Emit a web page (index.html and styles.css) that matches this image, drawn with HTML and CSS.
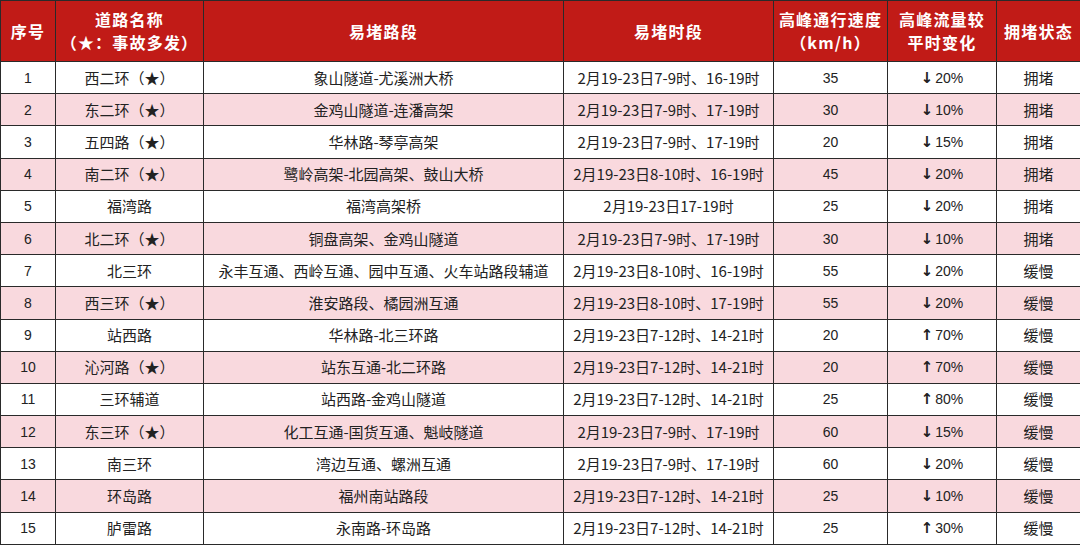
FILE: index.html
```html
<!DOCTYPE html>
<html lang="zh">
<head>
<meta charset="utf-8">
<link rel="stylesheet" href="styles.css">
</head>
<body>
<table class="tbl">
<colgroup>
<col class="c1"><col class="c2"><col class="c3"><col class="c4"><col class="c5"><col class="c6"><col class="c7">
</colgroup>
<thead>
<tr>
<th>序号</th>
<th><div class="hl">道路名称</div><div class="hl">（★：事故多发）</div></th>
<th>易堵路段</th>
<th>易堵时段</th>
<th><div class="hl">高峰通行速度</div><div class="hl">（km/h）</div></th>
<th><div class="hl">高峰流量较</div><div class="hl">平时变化</div></th>
<th>拥堵状态</th>
</tr>
</thead>
<tbody>
<tr><td class="num">1</td><td>西二环（★）</td><td>象山隧道-尤溪洲大桥</td><td>2月19-23日7-9时、16-19时</td><td class="num">35</td><td class="pct"><span class="ar">↓</span>20%</td><td>拥堵</td></tr>
<tr class="pk"><td class="num">2</td><td>东二环（★）</td><td>金鸡山隧道-连潘高架</td><td>2月19-23日7-9时、17-19时</td><td class="num">30</td><td class="pct"><span class="ar">↓</span>10%</td><td>拥堵</td></tr>
<tr><td class="num">3</td><td>五四路（★）</td><td>华林路-琴亭高架</td><td>2月19-23日7-9时、17-19时</td><td class="num">20</td><td class="pct"><span class="ar">↓</span>15%</td><td>拥堵</td></tr>
<tr class="pk"><td class="num">4</td><td>南二环（★）</td><td>鹭岭高架-北园高架、鼓山大桥</td><td>2月19-23日8-10时、16-19时</td><td class="num">45</td><td class="pct"><span class="ar">↓</span>20%</td><td>拥堵</td></tr>
<tr><td class="num">5</td><td>福湾路</td><td>福湾高架桥</td><td>2月19-23日17-19时</td><td class="num">25</td><td class="pct"><span class="ar">↓</span>20%</td><td>拥堵</td></tr>
<tr class="pk"><td class="num">6</td><td>北二环（★）</td><td>铜盘高架、金鸡山隧道</td><td>2月19-23日7-9时、17-19时</td><td class="num">30</td><td class="pct"><span class="ar">↓</span>10%</td><td>拥堵</td></tr>
<tr><td class="num">7</td><td>北三环</td><td>永丰互通、西岭互通、园中互通、火车站路段辅道</td><td>2月19-23日8-10时、16-19时</td><td class="num">55</td><td class="pct"><span class="ar">↓</span>20%</td><td>缓慢</td></tr>
<tr class="pk"><td class="num">8</td><td>西三环（★）</td><td>淮安路段、橘园洲互通</td><td>2月19-23日8-10时、17-19时</td><td class="num">55</td><td class="pct"><span class="ar">↓</span>20%</td><td>缓慢</td></tr>
<tr><td class="num">9</td><td>站西路</td><td>华林路-北三环路</td><td>2月19-23日7-12时、14-21时</td><td class="num">20</td><td class="pct"><span class="ar">↑</span>70%</td><td>缓慢</td></tr>
<tr class="pk"><td class="num">10</td><td>沁河路（★）</td><td>站东互通-北二环路</td><td>2月19-23日7-12时、14-21时</td><td class="num">20</td><td class="pct"><span class="ar">↑</span>70%</td><td>缓慢</td></tr>
<tr><td class="num">11</td><td>三环辅道</td><td>站西路-金鸡山隧道</td><td>2月19-23日7-12时、14-21时</td><td class="num">25</td><td class="pct"><span class="ar">↑</span>80%</td><td>缓慢</td></tr>
<tr class="pk"><td class="num">12</td><td>东三环（★）</td><td>化工互通-国货互通、魁岐隧道</td><td>2月19-23日7-9时、17-19时</td><td class="num">60</td><td class="pct"><span class="ar">↓</span>15%</td><td>缓慢</td></tr>
<tr><td class="num">13</td><td>南三环</td><td>湾边互通、螺洲互通</td><td>2月19-23日7-9时、17-19时</td><td class="num">60</td><td class="pct"><span class="ar">↓</span>20%</td><td>缓慢</td></tr>
<tr class="pk"><td class="num">14</td><td>环岛路</td><td>福州南站路段</td><td>2月19-23日7-12时、14-21时</td><td class="num">25</td><td class="pct"><span class="ar">↓</span>10%</td><td>缓慢</td></tr>
<tr><td class="num">15</td><td>胪雷路</td><td>永南路-环岛路</td><td>2月19-23日7-12时、14-21时</td><td class="num">25</td><td class="pct"><span class="ar">↑</span>30%</td><td>缓慢</td></tr>
</tbody>
</table>
</body>
</html>
```
FILE: styles.css
```css
html, body {
  margin: 0;
  padding: 0;
  background: #ffffff;
}
.tbl {
  width: 1080px;
  border-collapse: collapse;
  table-layout: fixed;
  font-family: "Noto Sans CJK SC", "Liberation Sans", sans-serif;
  color: #222;
}
.c1 { width: 55px; }
.c2 { width: 148px; }
.c3 { width: 360px; }
.c4 { width: 210px; }
.c5 { width: 114px; }
.c6 { width: 109px; }
.c7 { width: 84px; }
.tbl th, .tbl td {
  border: 1.5px solid #2a2a2a;
  text-align: center;
  vertical-align: middle;
  padding: 0;
  white-space: nowrap;
  overflow: hidden;
}
.tbl th {
  background: #c11b17;
  color: #ffffff;
  font-size: 16px;
  font-weight: bold;
  letter-spacing: 1.2px;
  line-height: 24px;
  height: 60px;
}
.hl {
  height: 23px;
  line-height: 23px;
}
.tbl td {
  font-size: 15px;
  line-height: 18px;
  height: 31.2px;
}
.tbl tr.pk td {
  background: #f9d9de;
}
.tbl td.num, .tbl td.pct {
  font-family: "Liberation Sans", "Noto Sans CJK SC", sans-serif;
  font-size: 14px;
}
.ar {
  font-family: "DejaVu Sans", sans-serif;
  font-weight: bold;
  font-size: 15px;
  margin-right: 2px;
}
```
